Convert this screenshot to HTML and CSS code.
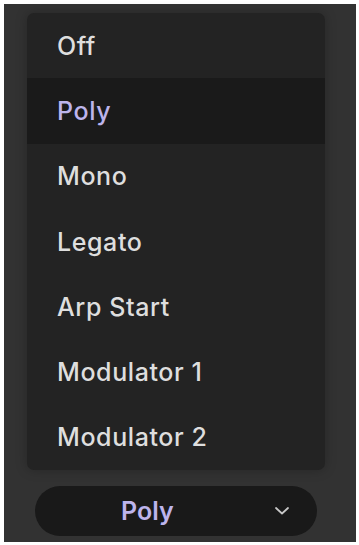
FILE: index.html
```html
<!DOCTYPE html>
<html>
<head>
<meta charset="utf-8">
<link rel="stylesheet" href="styles.css">
</head>
<body>
<div class="panel">
  <ul class="menu">
    <li class="item">Off</li>
    <li class="item selected">Poly</li>
    <li class="item">Mono</li>
    <li class="item">Legato</li>
    <li class="item">Arp Start</li>
    <li class="item">Modulator 1</li>
    <li class="item">Modulator 2</li>
  </ul>
  <div class="select">
    <span class="value">Poly</span>
    <svg class="chev" width="16" height="10" viewBox="0 0 16 10"><path d="M2 2 L8 7.5 L14 2" fill="none" stroke="#c8c8c8" stroke-width="1.8" stroke-linecap="round" stroke-linejoin="round"/></svg>
  </div>
</div>
</body>
</html>
```
FILE: styles.css
```css
html, body {
  margin: 0;
  padding: 0;
  background: #ffffff;
}
body {
  padding: 4px 3px 3px 4px;
  font-family: Inter, "Noto Sans", sans-serif;
}
.panel {
  width: 352px;
  height: 538px;
  background: #323232;
  padding-top: 9px;
  box-sizing: border-box;
  display: flex;
  flex-direction: column;
}
.menu {
  list-style: none;
  margin: 0 0 0 23px;
  padding: 0;
  width: 298px;
  background: #232323;
  border-radius: 7px;
  overflow: hidden;
  box-shadow: 0 0 12px rgba(0,0,0,0.25);
}
.item {
  height: 65.3px;
  display: flex;
  align-items: center;
  padding-left: 30px;
  font-size: 25px;
  font-weight: 500;
  letter-spacing: 0.6px;
  color: #dedede;
}
.item.selected {
  background: #1a1a1a;
  color: #bdb4ec;
}
.select {
  margin: 16px 0 0 31px;
  width: 282px;
  height: 50px;
  border-radius: 25px;
  background: #191919;
  display: flex;
  align-items: center;
  justify-content: space-between;
  padding: 0 27px 0 86px;
  box-sizing: border-box;
}
.value {
  font-size: 25px;
  font-weight: 600;
  color: #bdb4ec;
}
.chev {
  display: block;
}
```
